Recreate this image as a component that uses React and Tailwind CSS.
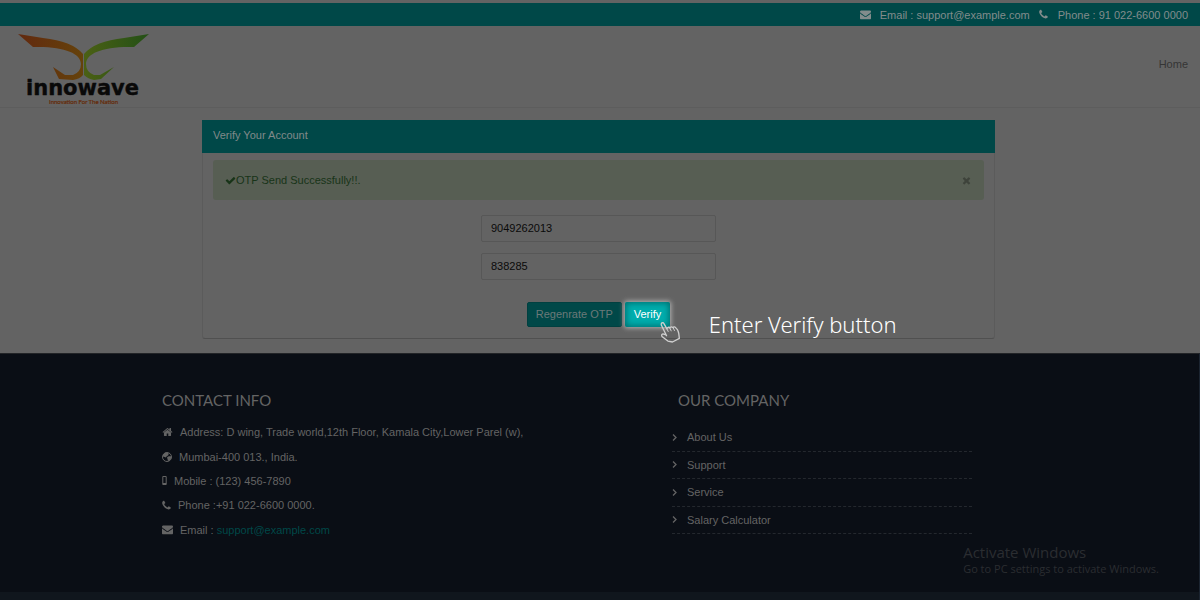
import React, { useState } from 'react';

const PATHS = {
    envelope: 'M1792 710v794q0 66-47 113t-113 47h-1472q-66 0-113-47t-47-113v-794q44 49 101 87 362 246 497 345 57 42 92.5 65.5t94.5 48 110 24.5h2q51 0 110-24.5t94.5-48 92.5-65.5q170-123 498-345 57-39 100-87zm0-294q0 79-49 151t-122 123q-376 261-468 325-10 7-42.5 31t-54 38.5-52 32.5-57.5 27-50 9h-2q-23 0-50-9t-57.5-27-52-32.5-54-38.5-42.5-31q-91-64-262-182.5t-205-142.5q-62-42-117-115.5t-55-136.5q0-78 41.5-130t118.5-52h1472q65 0 112.5 47t47.5 113z',
    phone: 'M1600 1240q0 27-10 70.5t-21 68.5q-21 50-122 106-94 51-186 51-27 0-53-3.5t-57.5-12.5-47-14.5-55.5-20.5-49-18q-98-35-175-83-127-79-264-216t-216-264q-48-77-83-175-3-9-18-49t-20.5-55.5-14.5-47-12.5-57.5-3.5-53q0-92 51-186 56-101 106-122 25-11 68.5-21t70.5-10q14 0 21 3 18 6 53 76 11 19 30 54t35 63.5 31 53.5q3 4 17.5 25t21.5 35.5 7 28.5q0 20-28.5 50t-62 55-62 53-28.5 46q0 9 5 22.5t8.5 20.5 14 24 11.5 19q76 137 174 235t235 174q2 1 19 11.5t24 14 20.5 8.5 22.5 5q18 0 46-28.5t53-62 55-62 50-28.5q14 0 28.5 7t35.5 21.5 25 17.5q25 15 53.5 31t63.5 35 54 30q70 35 76 53 3 7 3 21z',
    home: 'M1472 992v480q0 26-19 45t-45 19h-384v-384h-256v384h-384q-26 0-45-19t-19-45v-480q0-1 .5-3t.5-3l575-474 575 474q1 2 1 6zm223-69l-62 74q-8 9-21 11h-3q-13 0-21-7l-692-577-692 577q-12 8-24 7-13-2-21-11l-62-74q-8-10-7-23.5t11-21.5l719-599q32-26 76-26t76 26l244 204v-195q0-14 9-23t23-9h192q14 0 23 9t9 23v408l219 182q10 8 11 21.5t-7 23.5z',
    check: 'M1671 566q0 40-28 68l-724 724-136 136q-28 28-68 28t-68-28l-136-136-362-362q-28-28-28-68t28-68l136-136q28-28 68-28t68 28l294 295 656-657q28-28 68-28t68 28l136 136q28 28 28 68z',
    times: 'M1490 1322q0 40-28 68l-136 136q-28 28-68 28t-68-28l-294-294-294 294q-28 28-68 28t-68-28l-136-136q-28-28-28-68t28-68l294-294-294-294q-28-28-28-68t28-68l136-136q28-28 68-28t68 28l294 294 294-294q28-28 68-28t68 28l136 136q28 28 28 68t-28 68l-294 294 294 294q28 28 28 68z',
};

const Icon = ({ name, viewBox = '0 0 1792 1792', className }) => (
    <svg viewBox={viewBox} className={className} fill="currentColor" aria-hidden="true">
        <path d={PATHS[name]} />
    </svg>
);

const GlobeIcon = ({ className }) => (
    <svg viewBox="0 0 20 20" className={className} aria-hidden="true">
        <circle cx="10" cy="10" r="9" fill="none" stroke="currentColor" strokeWidth="2" />
        <path d="M2 5l5-4 6 1v4l-4 3-1 2-3-1-3-1zM12 9l5-1 2 4-4 5-3 1-1-4-1-3z" fill="currentColor" />
    </svg>
);

const MobileIcon = ({ className }) => (
    <svg viewBox="0 0 5 9" className={className} aria-hidden="true">
        <path d="M.8.5h3.400v8H.8z" fill="none" stroke="currentColor" />
        <path d="M.8 7h3.400v1.500H.8z" fill="currentColor" />
    </svg>
);

const HandPointer = ({ className }) => (
    <svg
        viewBox="0 0 64 68"
        className={className}
        fill="none"
        stroke="currentColor"
        strokeWidth="4"
        strokeLinejoin="round"
        strokeLinecap="round"
        aria-hidden="true"
    >
        <path d="M20 44L4 11Q3 5 8 4Q11 4 12 7L21 23Q24 15 30 20Q34 14 39 19Q44 14 49 21Q54 23 57 36L59 52L38 63L24 60L6 46Q3 40 9 38L18 41" />
        <path d="M21 23l4 8M30 20l4 9M40 19l4 9" strokeWidth="3" />
    </svg>
);

const Logo = () => (
    <svg viewBox="0 0 132 72" className="h-[72px] w-[132px] overflow-visible" role="img" aria-label="innowave">
        <defs>
            <linearGradient id="wingLeft" x1="0" x2="1">
                <stop offset="0" stopColor="#62290f" />
                <stop offset="1" stopColor="#65420b" />
            </linearGradient>
            <linearGradient id="wingRight" x1="0" x2="1">
                <stop offset="0" stopColor="#4b6014" />
                <stop offset="1" stopColor="#235016" />
            </linearGradient>
        </defs>
        <path
            d="M0 1L25 5Q54 8 65 21V42Q62 46 55 47L41 46L35 34L47 42H55Q63 39 63 31C63 20 45 13 15 14Z"
            fill="url(#wingLeft)"
        />
        <path
            d="M131 1L106 5Q77 8 66 21V42Q70 46 76 47L83 46L96 34L82 42H76Q68 39 68 31C68 20 86 13 116 14Z"
            fill="url(#wingRight)"
        />
        <text
            x="8"
            y="62"
            fontSize="21"
            fontWeight="700"
            fill="#090909"
            stroke="#090909"
            strokeWidth="0.4"
            strokeLinejoin="round"
            fontFamily="DejaVu Sans, sans-serif"
        >
            innowave
        </text>
        <text x="31" y="71" fontSize="6" fill="#652a08" stroke="#652a08" strokeWidth="0.2" fontFamily="Lato, sans-serif">
            Innovation For The Nation
        </text>
    </svg>
);

const contacts = [
    { icon: <Icon name="home" className="h-3 w-[11px]" />, text: 'Address: D wing, Trade world,12th Floor, Kamala City,Lower Parel (w),' },
    { icon: <GlobeIcon className="h-[10px] w-[10px]" />, text: 'Mumbai-400 013., India.' },
    { icon: <MobileIcon className="h-[9px] w-[5px]" />, text: 'Mobile : (123) 456-7890' },
    { icon: <Icon name="phone" viewBox="192 0 1408 1792" className="h-[11px] w-[9px]" />, text: 'Phone :+91 022-6600 0000.' },
    { icon: <Icon name="envelope" className="h-[11px] w-[11px]" />, text: 'Email : ', email: 'support@example.com' },
];

const companyLinks = ['About Us', 'Support', 'Service', 'Salary Calculator'];

const Header = () => (
    <header>
        <div className="flex h-[23px] items-center justify-end bg-[#004848] pr-3 text-[#828c8c]">
            <Icon name="envelope" className="mr-[9px] h-[11px] w-[11px]" />
            <span>Email : support@example.com</span>
            <Icon name="phone" viewBox="192 0 1408 1792" className="mr-[10px] ml-[9px] h-[11px] w-[9px]" />
            <span>Phone : 91 022-6600 0000</span>
        </div>
        <div className="flex h-[82px] items-center justify-between border-b border-[#5d5d5d] pt-[5px] pr-3 pl-[18px]">
            <Logo />
            <nav className="pb-[10px]">
                <a href="#home" className="text-[#353535]">Home</a>
            </nav>
        </div>
    </header>
);

const VerifyCard = () => {
    const [mobile, setMobile] = useState('9049262013');
    const [otp, setOtp] = useState('838285');
    const [alertOpen, setAlertOpen] = useState(true);

    return (
        <section className="rounded-b-[3px] border border-t-0 border-[#5b5b5b] border-b-[#505050]">
            <h1 className="-mx-px flex h-[33px] items-center bg-[#004848] px-[11px] pb-[3px] text-[#808a8a]">
                Verify Your Account
            </h1>
            <div className="px-[10px] pt-[7px] pb-[11px]">
                {alertOpen && (
                    <div className="flex h-10 items-center justify-between rounded-[3px] bg-[#575e53] px-3 text-[#183418]">
                        <p className="flex items-center">
                            <Icon name="check" className="h-[11px] w-[11px]" />
                            OTP Send Successfully!!.
                        </p>
                        <button type="button" aria-label="Close" onClick={() => setAlertOpen(false)}>
                            <Icon name="times" className="h-[11px] w-[11px] text-[#3e433b]" />
                        </button>
                    </div>
                )}
                <form className="mt-[15px] flex flex-col items-center" onSubmit={(e) => e.preventDefault()}>
                    <input
                        type="text"
                        aria-label="Mobile number"
                        value={mobile}
                        onChange={(e) => setMobile(e.target.value)}
                        className="h-[27px] w-[235px] rounded-[2px] border border-[#575757] px-[9px] pb-px text-[#0a0a0a]"
                    />
                    <input
                        type="text"
                        aria-label="OTP"
                        value={otp}
                        onChange={(e) => setOtp(e.target.value)}
                        className="mt-[11px] h-[27px] w-[235px] rounded-[2px] border border-[#575757] px-[9px] pb-px text-[#0a0a0a]"
                    />
                    <div className="mt-[22px] flex gap-[3px]">
                        <button type="button" className="h-[25px] rounded-[2px] border border-[#004040] bg-[#004848] px-2 pb-px text-[#6b7979]">
                            Regenrate OTP
                        </button>
                        <div className="relative">
                            <button
                                type="submit"
                                className="h-[25px] rounded-[2px] bg-[#00adad] px-[9px] pb-px text-white shadow-[0_0_5px_1px_#b4b4b4,inset_0_0_6px_1px_#006c6c]"
                            >
                                Verify
                            </button>
                            <HandPointer className="absolute top-[19px] left-[35px] h-[23px] w-[21px] text-[#cfcfcf]" />
                            <p className="absolute top-[7px] left-[84px] font-['Noto_Sans',sans-serif] text-[22px] leading-[30px] font-light whitespace-nowrap text-white">
                                Enter Verify button
                            </p>
                        </div>
                    </div>
                </form>
            </div>
        </section>
    );
};

const Footer = () => (
    <footer className="flex flex-1 flex-col border-t border-r border-t-[#222427] border-r-[#1b2430] bg-[#0a0e15] text-[#646464]">
        <div className="flex flex-1 pt-9 pl-[162px]">
            <div className="w-[510px]">
                <h2 className="font-[Lato,sans-serif] text-[15px] leading-5">CONTACT INFO</h2>
                <ul className="mt-[10px] grid h-[122px] grid-rows-5">
                    {contacts.map(({ icon, text, email }) => (
                        <li key={text} className="flex items-center gap-[7px]">
                            {icon}
                            <span className="whitespace-pre">
                                {text}
                                {email && <a href={`mailto:${email}`} className="text-[#004848]">{email}</a>}
                            </span>
                        </li>
                    ))}
                </ul>
            </div>
            <div className="w-[300px]">
                <h2 className="pl-[6px] font-[Lato,sans-serif] text-[15px] leading-5">OUR COMPANY</h2>
                <ul className="mt-[14px] grid h-[110px] grid-rows-4">
                    {companyLinks.map((label) => (
                        <li key={label} className="flex items-center border-b border-dashed border-[#24282e]">
                            <a href="#company" className="flex items-center gap-[10px]">
                                <svg viewBox="0 0 5 7" className="h-[7px] w-[5px]" fill="none" stroke="currentColor" strokeWidth="1.3" aria-hidden="true">
                                    <path d="M1 .5l3 3-3 3" />
                                </svg>
                                {label}
                            </a>
                        </li>
                    ))}
                </ul>
            </div>
        </div>
        <div className="h-2 bg-[#10161d]" />
    </footer>
);

const App = () => (
    <div className="relative flex min-h-screen flex-col bg-[#636363] pt-[3px] font-['Liberation_Sans',Arial,sans-serif] text-[11px] leading-4">
        <Header />
        <main className="pt-3 pr-[205px] pb-[14px] pl-[202px]">
            <VerifyCard />
        </main>
        <Footer />
        <aside className="absolute right-[41px] bottom-[23px] font-['Open_Sans',sans-serif] text-[#2a2d31]">
            <p className="text-[15px] leading-[18px]">Activate Windows</p>
            <p className="text-[11px] leading-4">Go to PC settings to activate Windows.</p>
        </aside>
    </div>
);

export default App;
